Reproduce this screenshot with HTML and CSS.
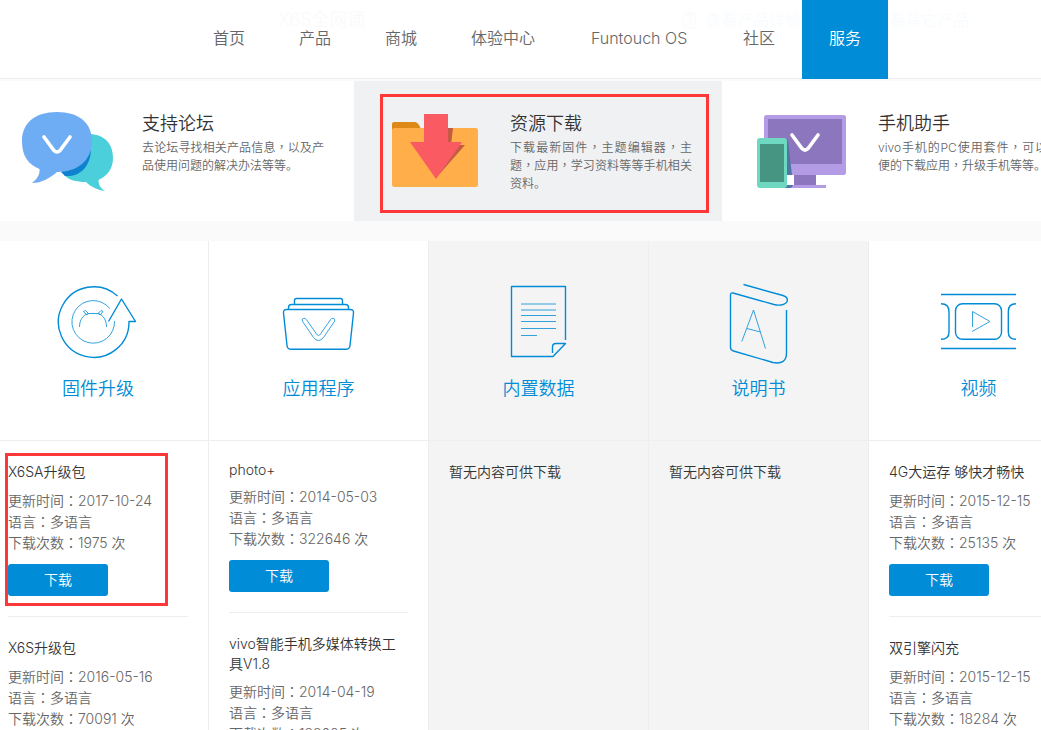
FILE: index.html
```html
<!DOCTYPE html>
<html lang="zh-CN">
<head>
<meta charset="utf-8">
<title>资源下载</title>
<link rel="stylesheet" href="styles.css">
</head>
<body>
<div class="page">
  <header class="header">
    <div class="ghost" aria-hidden="true">
      <span class="ghost-model">X6S全网通</span>
      <span class="ghost-link ghost-detail">
        <svg width="16" height="18" viewBox="0 0 16 18" fill="none" stroke="currentColor" stroke-width="1.5"><rect x="1.5" y="2.500" width="12" height="14" rx="2"/><path d="M4.500 1.500h6v3h-6zM4.500 8h6M4.500 10.500h6M4.500 13h6"/></svg>
        查看产品详情
      </span>
      <span class="ghost-link ghost-other">查看其它产品</span>
    </div>
    <nav class="nav">
      <a href="#">首页</a>
      <a href="#">产品</a>
      <a href="#">商城</a>
      <a href="#">体验中心</a>
      <a href="#" class="wide">Funtouch OS</a>
      <a href="#">社区</a>
      <a href="#" class="active">服务</a>
    </nav>
  </header>

  <section class="services">
    <a href="#" class="service">
      <svg class="service-icon" viewBox="22 111 92 84">
        <path fill="#4bcfda" d="M88 134C105 134 113 144 113 158C113 169 107 176 98.500 180C98.500 184 100 188 105 191C98 190 91 187 86 182C76 182 69 180 64 175Z"/>
        <path fill="#0e82cf" d="M61 172L91 150C90 168 79 177 65 176Z"/>
        <path fill="#6eacf3" d="M57 112C79 112 92 123 92 141C92 160 78 172 57 172C50 178 42 183 32 183C37 179 40 175 39.500 169C28 164 22 156 22 141C22 123 35 112 57 112Z"/>
        <path fill="none" stroke="#fff" stroke-width="3.600" stroke-linecap="round" d="M44 137L54 150.500Q57 153.500 60 150.500L70 137"/>
      </svg>
      <div class="service-text">
        <h3>支持论坛</h3>
        <p>去论坛寻找相关产品信息<span lang="zh-TW">，</span>以及产品使用问题的解决办法等等。</p>
      </div>
    </a>
    <a href="#" class="service current">
      <svg class="service-icon" viewBox="390 111 92 84">
        <path fill="#dd8817" d="M392 134V124q0-2 2-2H415q3 0 6 7V134Z"/>
        <rect x="392" y="128" width="86" height="59" rx="2.500" fill="#ffae49"/>
        <path fill="#c65b43" d="M447 128H453L451 145H465L436 178Z"/>
        <path fill="#fa5b62" d="M424 114H448V142H462L436 179L410 142H424Z"/>
      </svg>
      <div class="service-text">
        <h3>资源下载</h3>
        <p>下载最新固件<span lang="zh-TW">，</span>主题编辑器<span lang="zh-TW">，</span>主题<span lang="zh-TW">，</span>应用<span lang="zh-TW">，</span>学习资料等等手机相关资料。</p>
      </div>
      <span class="highlight highlight-card"></span>
    </a>
    <a href="#" class="service">
      <svg class="service-icon" viewBox="758 111 92 84">
        <rect x="764" y="115" width="82" height="60" rx="2.500" fill="#b39ce5"/>
        <path fill="#8c76bd" d="M768 119H842V164H768ZM794 175H816V185H794Z"/>
        <path fill="#b39ce5" d="M790 185H826V188H790Z"/>
        <path fill="#5276a4" d="M786 138L788 140L792 175H786ZM786 185H793L791 188H784Z"/>
        <rect x="757" y="138" width="30" height="50" rx="3" fill="#6fd8c1"/>
        <path fill="#469583" d="M760 144H784V182H760Z"/>
        <path fill="none" stroke="#fff" stroke-width="3.600" stroke-linecap="round" d="M792 135L802 148.500Q805 151.500 808 148.500L818 135"/>
      </svg>
      <div class="service-text">
        <h3>手机助手</h3>
        <p>vivo手机的PC使用套件<span lang="zh-TW">，</span>可以方便的下载应用<span lang="zh-TW">，</span>升级手机等等。</p>
      </div>
    </a>
  </section>

  <main class="columns">
    <section class="column">
      <a href="#" class="category">
        <svg class="category-icon" viewBox="57 283 84 84">
          <path d="M118.500 296A35.300 35.300 0 1 0 130 321.500H136.500L122.500 299L109.500 321.500"/>
          <path class="thin" d="M110.800 308.500A21.300 21.300 0 1 0 115.500 321M80.500 327C80.500 318 86 313.500 91 313.500H98C102 313.500 107.500 318 107.500 327M84.500 311.500L86.500 310.500L89.500 313.500L87.500 314.800ZM104 311.500L102 310.500L99 313.500L101.500 314.800Z"/>
        </svg>
        <h2>固件升级</h2>
      </a>
      <article class="item">
        <h4>X6SA升级包</h4>
        <ul><li>更新时间<span lang="zh-TW">：</span>2017-10-24</li><li>语言<span lang="zh-TW">：</span>多语言</li><li>下载次数<span lang="zh-TW">：</span>1975 次</li></ul>
        <button type="button">下载</button>
        <span class="highlight highlight-item"></span>
      </article>
      <article class="item">
        <h4>X6S升级包</h4>
        <ul><li>更新时间<span lang="zh-TW">：</span>2016-05-16</li><li>语言<span lang="zh-TW">：</span>多语言</li><li>下载次数<span lang="zh-TW">：</span>70091 次</li></ul>
        <button type="button">下载</button>
      </article>
    </section>

    <section class="column">
      <a href="#" class="category">
        <svg class="category-icon" viewBox="277 283 84 84">
          <path d="M286.500 309.500H350.500Q353.700 309.500 353.500 313L350 345.500Q349.500 349.300 346 349.300H291Q287.500 349.300 287 345.500L283.500 313Q283.300 309.500 286.500 309.500ZM288.500 309.500V307.500Q288.500 304.500 291.500 304.500H345.500Q348.500 304.500 348.500 307.500V309.500M294.500 304.500V300.500Q294.500 298.500 296.500 298.500H340.500Q342.500 298.500 342.500 300.500V304.500"/>
          <path class="thin" d="M302.400 321.200Q301.500 318.700 303.800 318.300Q305.500 318 306.500 319.700L316.200 333.500Q318.500 337.500 320.800 333.500L330.500 319.700Q331.500 318 333.200 318.300Q335.500 318.700 334.600 321.200L323.500 337.500Q318.500 343.500 313.500 337.500Z"/>
        </svg>
        <h2>应用程序</h2>
      </a>
      <article class="item">
        <h4 class="latin">photo+</h4>
        <ul><li>更新时间<span lang="zh-TW">：</span>2014-05-03</li><li>语言<span lang="zh-TW">：</span>多语言</li><li>下载次数<span lang="zh-TW">：</span>322646 次</li></ul>
        <button type="button">下载</button>
      </article>
      <article class="item">
        <h4 class="multiline">vivo智能手机多媒体转换工具V1.8</h4>
        <ul><li>更新时间<span lang="zh-TW">：</span>2014-04-19</li><li>语言<span lang="zh-TW">：</span>多语言</li><li>下载次数<span lang="zh-TW">：</span>132605 次</li></ul>
        <button type="button">下载</button>
      </article>
    </section>

    <section class="column empty">
      <a href="#" class="category">
        <svg class="category-icon" viewBox="497 283 84 84">
          <path d="M565.500 340V286.500H511.500V356.500H553L565.500 343.500H556Q552.500 343.500 552.500 347V353"/>
          <path class="thin" d="M521 304H556M521 310H556M521 315.500H556M521 321.500H556M521 328.500H556M521 335.500H537"/>
        </svg>
        <h2>内置数据</h2>
      </a>
      <article class="item"><h4>暂无内容可供下载</h4></article>
    </section>

    <section class="column empty">
      <a href="#" class="category">
        <svg class="category-icon" viewBox="717 283 84 84">
          <path d="M743.500 284.500L783 295.500C789 297.500 788.500 302.500 783.500 304.300Q779.500 305.800 774 304.500L733 293Q730.500 292.500 730.500 295V347.500Q730.500 350 733.500 351L773 362.500Q786.500 365 786.500 353V310"/>
          <path class="thin" d="M741.800 341.500L753.500 310L765.500 348.500M747 328.500L760.500 332"/>
        </svg>
        <h2>说明书</h2>
      </a>
      <article class="item"><h4>暂无内容可供下载</h4></article>
    </section>

    <section class="column">
      <a href="#" class="category">
        <svg class="category-icon" viewBox="937 283 84 84">
          <path d="M941 294.500H1016M941 348.500H1016M941 303.800Q949 303.800 949 311.500V332Q949 339.300 941 339.300M1016 303.800Q1008.300 303.800 1008.300 311.500V332Q1008.300 339.300 1016 339.300"/>
          <rect x="955.500" y="303.800" width="46" height="35.500" rx="7"/>
          <path class="thin" d="M972.500 327V311.500L990 321.500L972 331.500"/>
        </svg>
        <h2>视频</h2>
      </a>
      <article class="item">
        <h4>4G大运存 够快才畅快</h4>
        <ul><li>更新时间<span lang="zh-TW">：</span>2015-12-15</li><li>语言<span lang="zh-TW">：</span>多语言</li><li>下载次数<span lang="zh-TW">：</span>25135 次</li></ul>
        <button type="button">下载</button>
      </article>
      <article class="item">
        <h4>双引擎闪充</h4>
        <ul><li>更新时间<span lang="zh-TW">：</span>2015-12-15</li><li>语言<span lang="zh-TW">：</span>多语言</li><li>下载次数<span lang="zh-TW">：</span>18284 次</li></ul>
        <button type="button">下载</button>
      </article>
    </section>
  </main>
</div>
</body>
</html>
```

FILE: styles.css
```css
* { box-sizing: border-box; }

body, h2, h3, h4, p, ul { margin: 0; padding: 0; font-weight: inherit; }

body {
  background: #fafafa;
  color: #666;
  font-family: Inter, "Noto Sans CJK SC", sans-serif;
  font-size: 14px;
  font-weight: 350;
}

a { color: inherit; text-decoration: none; }
ul { list-style: none; }

/* Centred full-width comma and colon */
[lang="zh-TW"] { font-family: "Noto Sans CJK TC", sans-serif; line-height: 1; }

.page { height: 100vh; overflow: hidden; }

/* Header */
.header {
  position: relative;
  background: #fff;
  border-bottom: 1px solid #eee;
}

.nav {
  position: relative;
  display: flex;
  margin-left: 186px;
  margin-bottom: -1px;
}

.nav a {
  padding: 0 27px 2px;
  font-size: 16px;
  line-height: 77px;
  text-align: center;
  white-space: nowrap;
}

.nav .wide { min-width: 154px; }
.nav .active { background: #008cd6; color: #fff; }

/* Faded product bar that lies behind the navigation */
.ghost span { position: absolute; top: 8px; line-height: 24px; white-space: nowrap; }
.ghost .ghost-model { left: 278px; color: #fafafa; font-size: 18px; }
.ghost .ghost-link { display: flex; align-items: center; gap: 7px; color: #f9fcff; font-size: 16px; }
.ghost .ghost-detail { left: 682px; }
.ghost .ghost-other { left: 873px; }

/* Service cards */
.services {
  display: grid;
  grid-template-columns: repeat(3, 1fr);
  margin: 2px -49px 20px -14px;
  background: #fff;
}

.service {
  position: relative;
  display: flex;
  gap: 28px;
  min-height: 140px;
  padding: 30px 30px 0 36px;
}

.service.current { background: #f0f1f3; }
.service-icon { flex: none; width: 92px; height: 84px; overflow: visible; }
.service-text { width: 182px; }
.service-text h3 { color: #333; font-size: 18px; line-height: 26px; }
.service-text p { margin-top: 2px; font-size: 12px; line-height: 18px; text-align: justify; }

.highlight { position: absolute; border: 3px solid #fe3838; pointer-events: none; }
.highlight-card { top: 13px; right: 13px; bottom: 8px; left: 26px; }
.highlight-item { top: 12px; right: 20px; bottom: 10px; left: -3px; }

/* Download columns */
.columns {
  display: grid;
  grid-template-columns: 221fr repeat(4, 220fr);
  margin: 0 -48px 0 -12px;
}

.column { min-height: 100vh; background: #fff; border-right: 1px solid #eee; }
.column.empty { background: #f4f4f4; }

.category {
  display: flex;
  flex-direction: column;
  align-items: center;
  gap: 10px;
  padding: 42px 0 39px;
  border-bottom: 1px solid #eee;
  color: #008cd6;
}

.category-icon {
  width: 84px;
  height: 84px;
  fill: none;
  stroke: #008cd6;
  stroke-width: 1.4;
  stroke-linejoin: round;
}

.category-icon .thin { stroke-width: 0.8; }
.category h2 { font-size: 18px; line-height: 24px; }

.item { position: relative; margin: 0 20px; padding: 20px 0; }
.item + .item { border-top: 1px solid #eee; }
.item h4 { margin-bottom: 7px; color: #333; font-size: 14px; line-height: 22px; }
.item h4.latin { line-height: 18px; }
.item h4.multiline { padding-top: 1px; line-height: 20px; }
.item li { line-height: 21px; }

.item button {
  display: block;
  width: 100px;
  height: 32px;
  margin-top: 11px;
  padding: 0 0 2px;
  border: 0;
  border-radius: 3px;
  background: #008cd6;
  color: #fff;
  font: inherit;
}
```
